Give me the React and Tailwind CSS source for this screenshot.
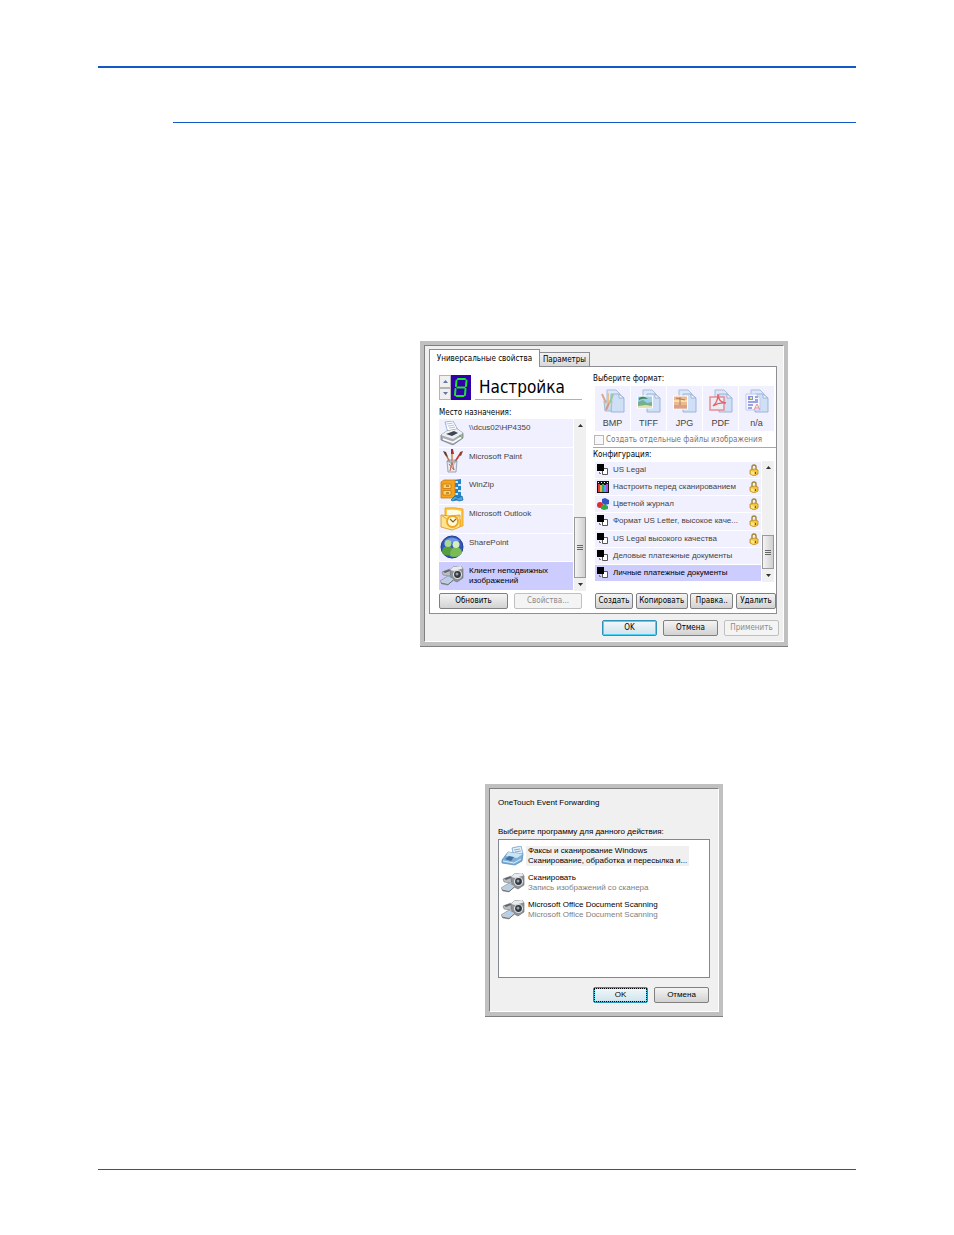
const tahoma = "font-['DejaVu_Sans_Condensed','DejaVu_Sans',sans-serif]";
const arial = "font-['Liberation_Sans',sans-serif]";

function Printer() {
  return (
    <svg viewBox="0 0 24 24" className="size-6 shrink-0">
      <path d="M5 1l8-1 5 9-10 3z" fill="#fff" stroke="#7d97c4" strokeWidth=".7" />
      <path d="M6.500 3l6-.8M8 5l6-.9M9 7l6-.8" stroke="#a9c4ea" />
      <path d="M1 14l6-4 10-2 6 4v5l-10 7-12-5z" fill="#a9aeb6" stroke="#6c7078" strokeWidth=".7" />
      <path d="M1 14l6-4 10-2 6 4-10 6z" fill="#eef0f3" />
      <path d="M6 13l8-3 4 2-6 3z" fill="#3f4553" />
      <path d="M3 18l10 3.500 8-5" stroke="#fff" strokeWidth="1.500" fill="none" />
      <circle cx="20" cy="15" r="1" fill="#59b84c" />
    </svg>
  );
}

function PaintCup() {
  return (
    <svg viewBox="0 0 24 24" className="size-6 shrink-0">
      <path d="M11 15L6 6" stroke="#b96a35" strokeWidth="1.500" />
      <path d="M12 15V4" stroke="#d08540" strokeWidth="1.500" />
      <path d="M13 16l7-11" stroke="#c8402f" strokeWidth="1.800" />
      <path d="M3 2l3 1 2 5-3-2z" fill="#5c3d2c" />
      <path d="M11 0h2l1 5h-3z" fill="#a5332b" />
      <path d="M20 3l3-1-2 5-2-1z" fill="#884327" />
      <path d="M7 12h10l-1 11H8z" fill="#dfe8ee" fillOpacity=".75" stroke="#8696a4" strokeWidth=".8" />
      <path d="M10 22l2-9 2 8M9 15l5 6" stroke="#c36552" fill="none" />
      <ellipse cx="12" cy="12" rx="5" ry="1.200" fill="none" stroke="#8696a4" strokeWidth=".7" />
    </svg>
  );
}

function Zip() {
  return (
    <svg viewBox="0 0 24 24" className="size-6 shrink-0">
      <path d="M13 2l8-1v21l-7 1z" fill="#2783c5" />
      <path d="M15 3h3v2h-3zM18 6h3v2h-3zM15 9h3v2h-3zM18 12h3v2h-3zM15 15h3v2h-3z" fill="#c5e8f8" />
      <path d="M1 4l3-2h11v16l-3 2H1z" fill="#f5a51c" stroke="#c67a13" strokeWidth=".8" />
      <path d="M3 6h8v4.500H3zM3 12.500h8V17H3z" fill="#ffd264" stroke="#c67a13" strokeWidth=".8" />
      <path d="M6 7.500h3v1H6zM6 14.500h3v1H6z" fill="#8b4b08" />
      <path d="M11 22l4-4 3 2 4-2 1 4-4 1-3-2-3 2z" fill="#4ba5dc" stroke="#15699f" strokeWidth=".8" />
    </svg>
  );
}

function Outlook() {
  return (
    <svg viewBox="0 0 24 24" className="size-6 shrink-0">
      <path d="M5 1q9-1 18 1v17q-8 2-18 0z" fill="#ffc93a" stroke="#e59d25" strokeWidth=".8" />
      <path d="M7 3q7-1 14 1v8H7z" fill="#fffae2" />
      <path d="M1 8l9 1 10-1v12l-8 3-11-3z" fill="#ffe48b" stroke="#dc931c" strokeWidth=".8" />
      <path d="M1 8l10 7 9-7" fill="none" stroke="#e9a736" />
      <circle cx="12.500" cy="14.500" r="5.500" fill="#fff8da" stroke="#eda624" strokeWidth="1.800" />
      <path d="M10 12l3 3 3-3" fill="none" stroke="#8d6320" strokeWidth="1.200" />
    </svg>
  );
}

function People() {
  return (
    <svg viewBox="0 0 24 24" className="size-6 shrink-0">
      <circle cx="12" cy="12" r="11" fill="#3158bd" stroke="#253f91" />
      <path d="M4 6q8-7 16 0-8 3-16 0" fill="#6e97e6" />
      <path d="M2 18q0-7 6-7 5 0 5 7-5 5-11 0" fill="#559d3d" />
      <path d="M10 21q0-9 6-9 6 1 6 6-5 6-12 3" fill="#79bb55" />
      <circle cx="8" cy="8.500" r="3.500" fill="#a9d993" />
      <circle cx="16" cy="9.500" r="3.500" fill="#d6edc0" />
    </svg>
  );
}

function Camera() {
  return (
    <svg viewBox="0 0 24 20" className="h-5 w-6 shrink-0">
      <path d="M2 6l8-3 4 3-5 4-6-1z" fill="#b9bdc2" stroke="#7d8288" strokeWidth=".6" />
      <path d="M3 5.500l6-2 2 1-6 2.500z" fill="#5f646b" />
      <path d="M10 4l3-3 8-1 2 3v9l-6 4-6-3z" fill="#8f9398" stroke="#666a70" strokeWidth=".6" />
      <path d="M10 4l3-3 8-1 1.500 2.500L14 5z" fill="#e9ebee" />
      <circle cx="17.500" cy="8.500" r="4" fill="#33363b" stroke="#dfe2e5" strokeWidth="1.200" />
      <circle cx="17" cy="8" r="1.500" fill="#8ea2b7" />
      <path d="M0 15l8-5 6 3-6 6-6-1z" fill="#c9ced5" stroke="#7b8088" strokeWidth=".6" />
      <path d="M4 14.500l5-3 3 1.500-5 3.500z" fill="#a8d2f7" />
      <path d="M1 17l7 1.500 5-4" stroke="#5d6269" strokeWidth=".8" fill="none" />
    </svg>
  );
}

function Fax() {
  return (
    <svg viewBox="0 0 24 20" className="h-5 w-6 shrink-0">
      <path d="M11 2l9-2 2 8-9 3z" fill="#e5f2fc" stroke="#628fb9" strokeWidth=".7" />
      <path d="M13 4l6-1M14 6l6-1" stroke="#85add0" />
      <path d="M1 14l6-8 15 2-1 7-7 4-13-2z" fill="#7eafd8" stroke="#4f83b3" strokeWidth=".7" />
      <path d="M7 6l15 2-6 4-11-2z" fill="#c9e4f7" />
      <path d="M4 13l4-3 5 1-3 4z" fill="#416f9e" />
      <path d="M2 15l11 2 7-4" stroke="#daf0ff" fill="none" />
    </svg>
  );
}

function BlackWhite() {
  return (
    <svg viewBox="0 0 12 12" className="size-3 shrink-0">
      <path d="M5.500 4.500h5v6h-5z" fill="#fff" stroke="#555" />
      <path d="M0 0h7v7H0z" fill="#000" />
      <path d="M2.500 8v1.500H4" fill="none" stroke="#777" />
    </svg>
  );
}

function ColorBars() {
  return (
    <svg viewBox="0 0 12 12" className="size-3 shrink-0">
      <path d="M0 0h12v12H0z" fill="#111" />
      <path d="M1 3h2v8H1z" fill="#e33b3b" />
      <path d="M3 4h2v7H3z" fill="#f3a34a" />
      <path d="M5 3h2v8H5z" fill="#37a953" />
      <path d="M7 4h2v7H7z" fill="#3fa9f5" />
      <path d="M9 3h2v8H9z" fill="#b04fd8" />
      <path d="M1 1h1v1H1zM4 1h1v1H4zM7 1h1v1H7zM10 1h1v1h-1z" fill="#fff" />
    </svg>
  );
}

function ColorBalls() {
  return (
    <svg viewBox="0 0 12 12" className="size-3 shrink-0">
      <path d="M5 1l3-1 4 2v4L8 7 5 5z" fill="#3157c8" />
      <circle cx="3" cy="7" r="3" fill="#d93030" />
      <path d="M4 8l3-2 4 2v3l-4 1-3-1z" fill="#35a64a" />
    </svg>
  );
}

function Lock() {
  return (
    <svg viewBox="0 0 10 12" className="h-3 w-[10px] shrink-0" aria-label="lock">
      <path d="M3 6V3q0-2 2-2t2 2v3" fill="none" stroke="#a08534" strokeWidth="1.400" />
      <path d="M1 6l5-1 3 1v4l-4 2-4-2z" fill="#f2c43b" stroke="#b98f24" strokeWidth=".8" />
      <path d="M2 7l3 1v3l-3-1z" fill="#fbe593" />
      <path d="M6.500 8v2" stroke="#75560e" />
    </svg>
  );
}

const formatArt = {
  BMP: (
    <>
      <path d="M3 12h8l-1 10H4z" fill="#c6dce7" stroke="#a5bfce" />
      <path d="M5 14L1 5" stroke="#dba98c" strokeWidth="2" />
      <path d="M7 14V4" stroke="#ebc08e" strokeWidth="2" />
      <path d="M9 14l3-9" stroke="#98c69d" strokeWidth="2" />
      <path d="M5 21l3-7" stroke="#dd9590" strokeWidth="2" />
    </>
  ),
  TIFF: (
    <>
      <path d="M.5 7h15v12H.5z" fill="#9ccfe9" stroke="#fff" />
      <path d="M1 13l5-2 4 3 5-1v5H1z" fill="#72b18b" />
      <path d="M2 9q5-3 9 1-5-1-9 1z" fill="#498461" />
      <path d="M1 17l8-1 6 1v1.500H1z" fill="#eadfac" />
    </>
  ),
  JPG: (
    <>
      <path d="M.5 7h14v13H.5z" fill="#edb98f" stroke="#fff" />
      <path d="M1 12h13" stroke="#fbe1a8" strokeWidth="2" />
      <path d="M7 8v11M3 9l9 2" stroke="#b67a60" />
      <path d="M1 16h13v3.500H1z" fill="#d9a18b" />
    </>
  ),
  PDF: (
    <>
      <path d="M1 8h14v13H1z" fill="#ececf2" stroke="#e88d94" strokeWidth="1.500" />
      <path d="M4 17q5-4 5-12 0 8 8 9-7-1-13 3z" fill="none" stroke="#e0626d" strokeWidth="1.300" />
    </>
  ),
  "n/a": (
    <>
      <path d="M1 5h10l4 4v12H1z" fill="#f5f7ff" stroke="#c3cce8" />
      <path d="M3 7h5v4H3z" fill="#8591d9" />
      <path d="M5 8h2v2H5z" fill="#f1e281" />
      <path d="M10 8h3M10 11h3M3 13h10M3 16h5M3 19h4" stroke="#7c86dd" strokeWidth="1.500" />
      <path d="M9 21l3-6 3 6M10 19h4" fill="none" stroke="#e38d9e" />
    </>
  ),
};

function FormatIcon({ name }) {
  return (
    <svg viewBox="0 0 24 24" className="size-6">
      <path d="M6 1h9l4 4v13H6z" fill="#dce7f8" stroke="#a9bbdc" />
      <path d="M10 5h8l5 4v14H10z" fill="#cfdff6" stroke="#9eb3d8" />
      <path d="M18 5v4h5z" fill="#f5f9ff" stroke="#9eb3d8" />
      {formatArt[name]}
    </svg>
  );
}

function Digit() {
  return (
    <svg viewBox="0 0 20 25" className="h-[25px] w-5 bg-[#3000a8]">
      <path
        d="M7 4h7M5.500 5.500L5 11M15.500 5.500L15 11M6.500 12.500h7M4.500 14L4 20M14.500 14L14 20M5.500 21h7"
        stroke="#18e828"
        strokeWidth="2"
        strokeLinecap="round"
      />
    </svg>
  );
}

function Arrow({ down, color = "#333" }) {
  return (
    <svg viewBox="0 0 5 3" className="h-[3px] w-[5px]">
      <path d={down ? "M0 0h5L2.500 3z" : "M0 3h5L2.500 0z"} fill={color} />
    </svg>
  );
}

function Scrollbar({ thumb }) {
  return (
    <div className="flex w-3 shrink-0 flex-col items-center bg-[#f0f0f0]">
      <button aria-label="Вверх" className="flex h-3 w-full shrink-0 items-center justify-center">
        <Arrow />
      </button>
      <div className="flex-1" />
      <div
        className={`flex w-full shrink-0 flex-col items-center justify-center gap-px border border-[#9a9a9a] bg-linear-to-r from-[#f4f4f4] to-[#d0d0d0] ${thumb}`}
      >
        <i className="h-px w-[6px] bg-[#666]" />
        <i className="h-px w-[6px] bg-[#666]" />
        <i className="h-px w-[6px] bg-[#666]" />
      </div>
      <button aria-label="Вниз" className="flex h-[13px] w-full shrink-0 items-center justify-center">
        <Arrow down />
      </button>
    </div>
  );
}

function Button({ children, width, primary, disabled, focused, font = tahoma }) {
  let look = "border-[#808080] bg-linear-to-b from-[#f4f4f4] to-[#d2d2d2] text-black";
  if (primary) look = "border-[#2f91b8] bg-linear-to-b from-[#f2f8fb] to-[#cfe3ec] text-black ring-1 ring-inset ring-[#4fd3f5]";
  if (disabled) look = "border-[#c0c0c0] bg-[#f4f4f4] text-[#8c8c8c]";
  return (
    <button
      disabled={disabled}
      className={`flex h-4 items-center justify-center rounded-xs border text-[8px] leading-3 whitespace-nowrap ${look} ${font} ${width} ${focused ? "outline-1 -outline-offset-2 outline-dotted outline-black" : ""}`}
    >
      {children}
    </button>
  );
}

function Frame({ children, className }) {
  return (
    <section className={`border-4 border-[#c0c0c0] shadow-[0_1px_0_#808080] ${className}`}>
      <div className="h-full border-t border-r border-b border-l border-t-[#808080] border-r-white border-b-white border-l-[#808080] bg-[#f0f0f0]">
        {children}
      </div>
    </section>
  );
}

const destinations = [
  { name: "\\\\dcus02\\HP4350", Icon: Printer },
  { name: "Microsoft Paint", Icon: PaintCup },
  { name: "WinZip", Icon: Zip },
  { name: "Microsoft Outlook", Icon: Outlook },
  { name: "SharePoint", Icon: People },
  { name: "Клиент неподвижных изображений", Icon: Camera, selected: true },
];

const configs = [
  { name: "US Legal", Icon: BlackWhite, locked: true },
  { name: "Настроить перед сканированием", Icon: ColorBars, locked: true },
  { name: "Цветной журнал", Icon: ColorBalls, locked: true },
  { name: "Формат US Letter, высокое каче...", Icon: BlackWhite, locked: true },
  { name: "US Legal высокого качества", Icon: BlackWhite, locked: true },
  { name: "Деловые платежные документы", Icon: BlackWhite },
  { name: "Личные платежные документы", Icon: BlackWhite, selected: true },
];

const programs = [
  { name: "Факсы и сканирование Windows", note: "Сканирование, обработка и пересылка и...", Icon: Fax, active: true },
  { name: "Сканировать", note: "Запись изображений со сканера", Icon: Camera },
  { name: "Microsoft Office Document Scanning", note: "Microsoft Office Document Scanning", Icon: Camera },
];

function Destinations() {
  return (
    <div className="flex w-[147px] flex-col pt-[2px]">
      <div className="flex h-[25px] pr-1">
        <div className="flex w-3 flex-col">
          <button aria-label="Больше" className="flex flex-1 items-center justify-center border border-[#b4b4b4] bg-[#f0f0f0]">
            <Arrow color="#6078a8" />
          </button>
          <button aria-label="Меньше" className="flex flex-1 items-center justify-center border border-[#b4b4b4] bg-[#f0f0f0]">
            <Arrow down color="#6078a8" />
          </button>
        </div>
        <Digit />
        <h1 className={`ml-1 flex-1 border-b border-[#b0b0b0] pl-1 text-[17px] leading-6 ${tahoma}`}>Настройка</h1>
      </div>
      <h2 className={`mt-[7px] text-[8px] leading-3 whitespace-nowrap ${tahoma}`}>Место назначения:</h2>
      <div className="flex h-[172px] gap-px">
        <ul className="grid flex-1 auto-rows-fr gap-px pb-px">
          {destinations.map(({ name, Icon, selected }) => (
            <li
              key={name}
              className={`flex min-h-0 items-center gap-[5px] pl-px ${selected ? "bg-[#ccccff] text-black" : "bg-[#f0f0ff] text-[#444]"}`}
            >
              <Icon />
              <span className="max-w-[90px] flex-1 self-start pt-1 text-[8px] leading-[10px]">{name}</span>
            </li>
          ))}
        </ul>
        <Scrollbar thumb="h-[61px]" />
      </div>
      <div className="mt-[2px] flex justify-between pr-1">
        <Button width="w-[69px]">Обновить</Button>
        <Button width="w-[68px]" disabled>Свойства...</Button>
      </div>
    </div>
  );
}

function Configs() {
  return (
    <div className="flex w-[183px] flex-col">
      <h2 className={`text-[8px] leading-3 ${tahoma}`}>Выберите формат:</h2>
      <div className="mt-px flex h-[45px] gap-px pl-[2px]">
        {Object.keys(formatArt).map((name) => (
          <button key={name} className="flex w-[35px] flex-col items-center bg-[#f0f0ff] pt-[3px] text-[9px] leading-3 text-[#444]">
            <FormatIcon name={name} />
            <span className="pt-1">{name}</span>
          </button>
        ))}
      </div>
      <label className={`mt-[3px] flex h-3 items-center gap-[2px] pl-px text-[8px] leading-3 whitespace-nowrap text-[#777] ${tahoma}`}>
        <input type="checkbox" disabled className="size-[10px] shrink-0 appearance-none border border-[#b8b8b8] bg-[#f8f8f8]" />
        Создать отдельные файлы изображения
      </label>
      <h2 className={`mt-px border-t border-[#a8a8a8] pt-px text-[8px] leading-3 ${tahoma}`}>Конфигурация:</h2>
      <div className="flex h-[121px] gap-px pr-[2px] pl-[2px]">
        <ul className="grid min-w-0 flex-1 auto-rows-fr gap-px py-px">
          {configs.map(({ name, Icon, locked, selected }) => (
            <li
              key={name}
              className={`flex min-h-0 items-center gap-1 px-[2px] text-[8px] leading-3 whitespace-nowrap ${selected ? "bg-[#ccccff] text-black" : "bg-[#f0f0ff] text-[#444]"}`}
            >
              <Icon />
              <span className="flex-1">{name}</span>
              {locked && <Lock />}
            </li>
          ))}
        </ul>
        <Scrollbar thumb="h-[34px]" />
      </div>
      <div className="mt-auto flex justify-between pl-[2px]">
        <Button width="w-[38px]">Создать</Button>
        <Button width="w-[52px]">Копировать</Button>
        <Button width="w-[43px]">Правка..</Button>
        <Button width="w-[40px]">Удалить</Button>
      </div>
    </div>
  );
}

function SettingsDialog() {
  return (
    <Frame className="ml-[420px] w-[368px]">
      <div className="px-[4px] pt-[3px] pb-[5px]">
        <div role="tablist" className={`flex items-end text-[8px] leading-3 whitespace-nowrap ${tahoma}`}>
          <button role="tab" aria-selected="true" className="relative -mb-px flex h-[18px] w-[111px] items-center justify-center border border-b-0 border-[#8c8e94] bg-white">
            Универсальные свойства
          </button>
          <button role="tab" aria-selected="false" className="flex h-[14px] w-[50px] items-center justify-center border border-b-0 border-l-0 border-[#8c8e94] bg-linear-to-b from-[#f2f2f2] to-[#d8d8d8]">
            Параметры
          </button>
        </div>
        <div className="mr-[2px] flex justify-between border border-[#8c8e94] bg-white pt-[6px] pb-1 pl-[9px]">
          <Destinations />
          <Configs />
        </div>
        <div className="mt-[6px] flex justify-end gap-[6px]">
          <Button width="w-[55px]" primary>OK</Button>
          <Button width="w-[55px]">Отмена</Button>
          <Button width="w-[55px]" disabled>Применить</Button>
        </div>
      </div>
    </Frame>
  );
}

function ForwardingDialog() {
  return (
    <Frame className="ml-[485px] w-[238px]">
      <div className="px-2 pt-[6px] pb-2 text-[8px] leading-[10px]">
        <h1 className="pt-[2px] leading-3">OneTouch Event Forwarding</h1>
        <h2 className="mt-[17px] leading-3 whitespace-nowrap">Выберите программу для данного действия:</h2>
        <ul className="mt-px flex h-[139px] flex-col gap-2 border border-[#828790] bg-white px-[2px] pt-[6px]">
          {programs.map(({ name, note, Icon, active }) => (
            <li key={name} className="flex h-[19px] items-center gap-px">
              <Icon />
              <div className={`px-[2px] whitespace-nowrap ${active ? "bg-[#f0f0f0]" : ""}`}>
                <p>{name}</p>
                <p className={active ? "" : "text-[#808080]"}>{note}</p>
              </div>
            </li>
          ))}
        </ul>
        <div className="mt-[9px] mr-px flex justify-end gap-[6px]">
          <Button width="w-[55px]" font={arial} primary focused>OK</Button>
          <Button width="w-[55px]" font={arial}>Отмена</Button>
        </div>
      </div>
    </Frame>
  );
}

export default function App() {
  return (
    <main className={`flex min-h-screen flex-col bg-white px-[98px] pt-[66px] pb-[65px] text-black ${arial}`}>
      <hr className="border-t-2 border-[#1259c7]" />
      <hr className="mt-[54px] ml-[75px] border-[#1259c7]" />
      <div className="mt-[218px] -ml-[98px]">
        <SettingsDialog />
      </div>
      <div className="mt-[138px] -ml-[98px]">
        <ForwardingDialog />
      </div>
      <hr className="mt-auto border-[#1259c7]" />
    </main>
  );
}
